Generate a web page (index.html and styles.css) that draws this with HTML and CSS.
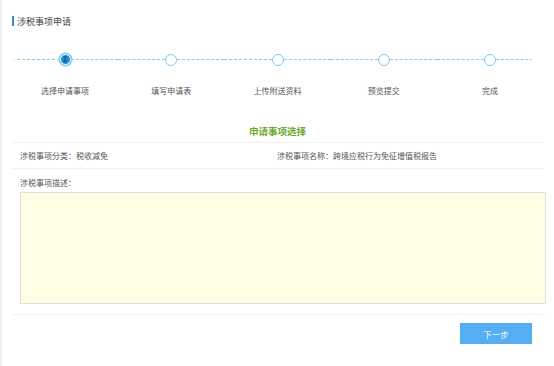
FILE: index.html
```html
<!DOCTYPE html>
<html lang="zh-CN">
<head>
  <meta charset="UTF-8" />
  <title>涉税事项申请</title>
  <link rel="stylesheet" href="styles.css">
</head>
<body>
  <div class="page">
    <div class="title">涉税事项申请</div>

    <div class="steps">
      <div class="step active">
        <div class="step-head"><span class="dot">1</span></div>
        <div class="step-label">选择申请事项</div>
      </div>
      <div class="step">
        <div class="step-head"><span class="dot"></span></div>
        <div class="step-label">填写申请表</div>
      </div>
      <div class="step">
        <div class="step-head"><span class="dot"></span></div>
        <div class="step-label">上传附送资料</div>
      </div>
      <div class="step">
        <div class="step-head"><span class="dot"></span></div>
        <div class="step-label">预览提交</div>
      </div>
      <div class="step">
        <div class="step-head"><span class="dot"></span></div>
        <div class="step-label">完成</div>
      </div>
    </div>

    <div class="section-title">申请事项选择</div>

    <div class="info-row">
      <div class="info-cell">涉税事项分类：税收减免</div>
      <div class="info-cell">涉税事项名称：跨境应税行为免征增值税报告</div>
    </div>

    <div class="desc">
      <div class="desc-label">涉税事项描述：</div>
      <textarea class="desc-box"></textarea>
    </div>

    <div class="footer">
      <button class="btn-next">下一步</button>
    </div>
  </div>
</body>
</html>
```

FILE: styles.css
```css
body {
  margin: 0;
  background: #fff;
  font-family: "Noto Sans CJK SC", "Noto Sans", sans-serif;
  color: #555;
  border-left: 2px solid #f0f0f0;
  height: 366px;
  box-sizing: border-box;
}

.page {
  margin-left: 10px;
  width: 531px;
  padding-top: 15px;
}

.title {
  display: flex;
  align-items: center;
  height: 12px;
  font-size: 9px;
  color: #444;
}

.title::before {
  content: "";
  width: 2px;
  height: 10px;
  margin-right: 3px;
  background: #2e8fdc;
}

.steps {
  display: flex;
  margin-top: 25px;
}

.step {
  flex: 1;
  display: flex;
  flex-direction: column;
  align-items: center;
}

.step-head {
  width: 100%;
  display: flex;
  align-items: center;
  height: 15px;
}

.step-head::before,
.step-head::after {
  content: "";
  flex: 1;
  height: 0;
  border-top: 1px dashed #86cff3;
}

.step:first-child .step-head::before {
  clip-path: inset(-1px 0 -1px 2px);
}

.step:last-child .step-head::after {
  clip-path: inset(-1px 11px -1px 0);
}

.dot {
  width: 10px;
  height: 10px;
  border: 1.5px solid #7cc8f1;
  border-radius: 50%;
  background: #fff;
  font-size: 7px;
  line-height: 10px;
  text-align: center;
  color: #0b4d7e;
  font-weight: bold;
}

.active .dot {
  width: 9px;
  height: 9px;
  line-height: 9px;
  border: 1px solid #fff;
  background: #1c8fd8;
  box-shadow: 0 0 0 1.5px #86ccf1;
}

.step-label {
  margin-top: 18px;
  font-size: 8px;
  color: #555;
}

.section-title {
  margin-top: 28px;
  text-align: center;
  font-size: 9.5px;
  font-weight: bold;
  color: #6aa92f;
  padding-bottom: 4px;
  border-bottom: 1px solid #f0f0f0;
}

.info-row {
  display: flex;
  height: 25px;
  align-items: center;
  border-bottom: 1px solid #f0f0f0;
  font-size: 8px;
}

.info-cell {
  padding-left: 8px;
  width: 257px;
}

.info-cell + .info-cell {
  padding-left: 0;
  width: auto;
}

.desc {
  padding: 8px 0 10px 8px;
  margin-right: -3px;
  border-bottom: 1px solid #f0f0f0;
}

.desc-label {
  font-size: 8px;
  line-height: 11px;
}

.desc-box {
  display: block;
  width: 100%;
  height: 112px;
  margin-top: 4px;
  box-sizing: border-box;
  background: #ffffe6;
  border: 1px solid #dedede;
  resize: none;
  outline: none;
}

.footer {
  display: flex;
  justify-content: flex-end;
  padding: 8px 11px 0 0;
}

.btn-next {
  width: 72px;
  height: 21px;
  border: none;
  background: #55aef2;
  color: #fff;
  font-family: "Noto Sans CJK SC", sans-serif;
  font-size: 8.5px;
  padding: 0;
  cursor: pointer;
}
```
